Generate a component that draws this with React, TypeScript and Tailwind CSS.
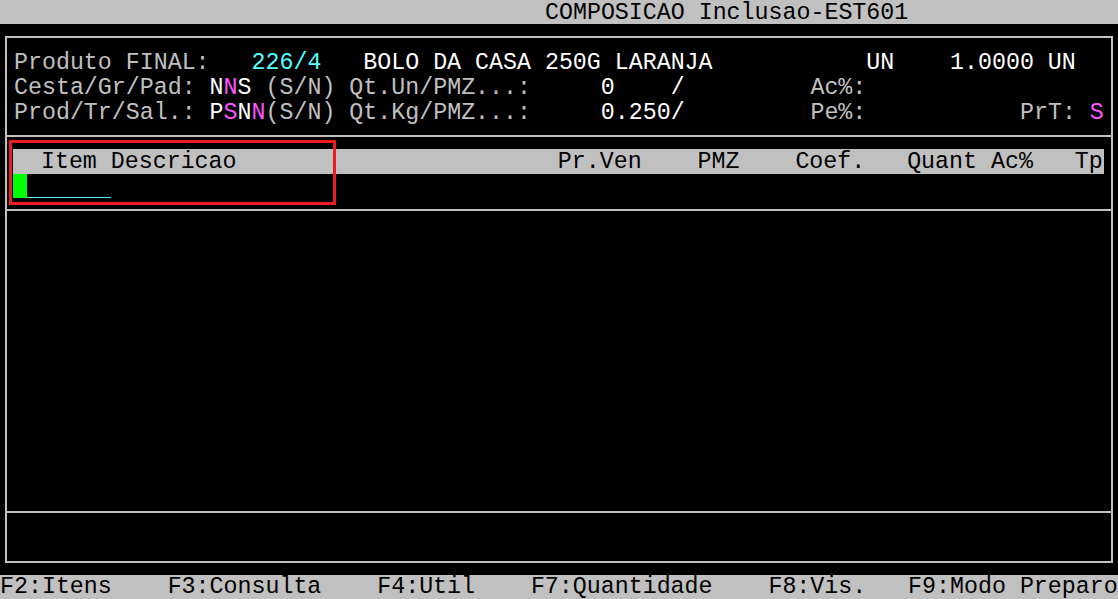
import React from "react";

const W = "text-white";
const G = "text-[#c0c0c0]";
const C = "text-[#55ffff]";
const M = "text-[#ff55ff]";

function S({ c, children }: { c: string; children: React.ReactNode }) {
  return <span className={c}>{children}</span>;
}

export default function App() {
  return (
    <div
      className="relative w-[1118px] h-[599px] overflow-hidden bg-black text-[23.29px] leading-[25px] whitespace-pre"
      style={{ fontFamily: '"Liberation Mono", "Courier New", monospace' }}
    >
      {/* Title bar */}
      <div className="h-[24px] leading-[24px] pt-[1px] bg-[#c0c0c0] text-black pl-[545px]">
        COMPOSICAO Inclusao-EST601
      </div>

      {/* Frame */}
      <div className="mt-[12px] ml-[5px] w-[1108px] border-2 border-[#c0c0c0] flex flex-col">
        {/* Section 1 */}
        <div className="h-[99px] pt-[13px] pl-[7px] border-b-2 border-[#c0c0c0]">
          <div className="h-[25px]">
            <S c={G}>Produto FINAL:   </S>
            <S c={C}>226/4</S>
            <S c={W}>   BOLO DA CASA 250G LARANJA           UN    1.0000 UN</S>
          </div>
          <div className="h-[25px]">
            <S c={G}>Cesta/Gr/Pad: </S>
            <S c={W}>N</S>
            <S c={M}>N</S>
            <S c={W}>S</S>
            <S c={G}> (S/N) Qt.Un/PMZ...:</S>
            <S c={W}>     0    /</S>
            <S c={G}>         Ac%:</S>
          </div>
          <div className="h-[25px]">
            <S c={G}>Prod/Tr/Sal.: </S>
            <S c={W}>P</S>
            <S c={M}>S</S>
            <S c={W}>N</S>
            <S c={M}>N</S>
            <S c={G}>(S/N) Qt.Kg/PMZ...:</S>
            <S c={W}>     0.250/</S>
            <S c={G}>         Pe%:           PrT: </S>
            <S c={M}>S</S>
          </div>
        </div>

        {/* Section 2 */}
        <div className="h-[74px] pt-[12px] pl-[6px] border-b-2 border-[#c0c0c0]">
          <div className="h-[25px] w-[1091px] bg-[#c0c0c0] text-black overflow-hidden">
            <div className="pt-[1px]">
              {"  Item Descricao                       Pr.Ven    PMZ    Coef.   Quant Ac%   Tp"}
            </div>
          </div>
          <div className="h-[24px] flex items-stretch">
            <div className="w-[14px] bg-[#00ff00]" />
            <div className="w-[84px] border-b border-[#4ff0f0]" />
          </div>
        </div>

        {/* Section 3 */}
        <div className="h-[302px] border-b-2 border-[#c0c0c0]" />

        {/* Section 4 */}
        <div className="h-[48px]" />
      </div>

      {/* Footer */}
      <div className="mt-[12px] h-[24px] leading-[24px] bg-[#c0c0c0] text-black">
        {"F2:Itens    F3:Consulta    F4:Util    F7:Quantidade    F8:Vis.   F9:Modo Preparo"}
      </div>

      {/* Red highlight box */}
      <div className="absolute left-[9px] top-[140px] w-[327px] h-[65px] border-[3px] border-[#ed1c24]" />
    </div>
  );
}
